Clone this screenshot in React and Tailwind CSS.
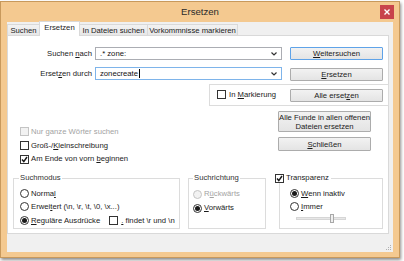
import React from "react";

const Check = ({ checked, disabled }) => (
  <span
    className={`flex h-[9px] w-[9px] shrink-0 items-center justify-center border ${
      disabled ? "border-[#c4c4c4] bg-[#f2f2f2]" : "border-[#333] bg-white"
    }`}
  >
    {checked && (
      <svg width="7" height="7" viewBox="0 0 7 7">
        <path d="M1 3.6 L2.8 5.6 L6 1" fill="none" stroke="#1a1a1a" strokeWidth="1.5" />
      </svg>
    )}
  </span>
);

const Radio = ({ checked, disabled }) => (
  <span
    className={`flex h-[9px] w-[9px] shrink-0 items-center justify-center rounded-full border ${
      disabled ? "border-[#c4c4c4] bg-[#f2f2f2]" : "border-[#333] bg-white"
    }`}
  >
    {checked && <span className="h-[5px] w-[5px] rounded-full bg-[#1a1a1a]" />}
  </span>
);

const Btn = ({ children, className = "" }) => (
  <div
    className={`flex w-[93px] shrink-0 items-center justify-center rounded-[1px] border bg-gradient-to-b from-[#f2f2f2] to-[#e4e4e4] text-center leading-[9px] text-[#1a1a1a] ${className}`}
  >
    {children}
  </div>
);

const Combo = ({ text, focused, caret }) => (
  <div
    className={`ml-[3px] flex h-[13px] w-[187px] items-center border bg-white pl-[4px] pr-[4px] ${
      focused ? "border-[#7eb4ea]" : "border-[#abadb3]"
    }`}
  >
    <span className="text-[#111]">{text}</span>
    {caret && <span className="ml-px h-[9px] w-px bg-black" />}
    <svg className="ml-auto" width="6" height="4" viewBox="0 0 6 4">
      <path d="M0.5 0.5 L3 3 L5.5 0.5" fill="none" stroke="#333" strokeWidth="1.2" />
    </svg>
  </div>
);

const K = ({ children }) => <span className="underline underline-offset-1">{children}</span>;

export default function App() {
  return (
    <div className="h-[261px] w-[404px] overflow-hidden bg-white font-['Liberation_Sans',Arial,sans-serif] text-[7.7px] text-[#1a1a1a]">
      <div className="mt-px flex h-[257px] w-[400px] flex-col border border-[#c8995c] bg-[#f4c990] px-[6px] shadow-[1px_2px_3px_rgba(0,0,0,0.45)]">
        {/* title bar */}
        <div className="relative flex h-[20px] shrink-0 items-center justify-center">
          <span className="text-[9.6px] text-[#2b2b2b]">Ersetzen</span>
          <div className="absolute right-[-1px] top-[3px] flex h-[14px] w-[14px] items-center justify-center bg-[#c8434b]">
            <svg width="6" height="6" viewBox="0 0 6 6">
              <path d="M0.5 0.5 L5.5 5.5 M5.5 0.5 L0.5 5.5" stroke="#fff" strokeWidth="1.4" />
            </svg>
          </div>
        </div>

        {/* client */}
        <div className="flex h-[230px] w-[386px] flex-col bg-[#f0f0f0]">
          {/* tabs */}
          <div className="flex h-[14px] items-end">
            <div className="flex h-[12px] w-[33px] items-center justify-center border border-b-0 border-[#d9d9d9] bg-gradient-to-b from-[#f2f2f2] to-[#e6e6e6]">
              Suchen
            </div>
            <div className="relative z-10 -ml-px flex h-[15px] w-[41px] items-center justify-center border border-b-0 border-[#d9d9d9] bg-white pb-[2px]">
              Ersetzen
            </div>
            <div className="-ml-px flex h-[12px] w-[69px] items-center justify-center border border-b-0 border-[#d9d9d9] bg-gradient-to-b from-[#f2f2f2] to-[#e6e6e6]">
              In Dateien suchen
            </div>
            <div className="-ml-px flex h-[12px] w-[91px] items-center justify-center border border-b-0 border-[#d9d9d9] bg-gradient-to-b from-[#f2f2f2] to-[#e6e6e6]">
              Vorkommnisse markieren
            </div>
          </div>

          {/* panel */}
          <div className="-mt-px h-[199px] w-[382px] border border-[#d9d9d9] bg-white">
            <div className="mt-[11px] flex items-center">
              <span className="w-[84px] text-right">
                Suchen <K>n</K>ach
              </span>
              <Combo text=".* zone:" />
              <Btn className="ml-[8px] h-[13px] border-[#5fa3e8]">
                <span>
                  <K>W</K>eitersuchen
                </span>
              </Btn>
            </div>
            <div className="mt-[6px] flex items-center">
              <span className="w-[84px] text-right">
                Erset<K>z</K>en durch
              </span>
              <Combo text="zonecreate" focused caret />
              <Btn className="ml-[8px] mt-[2px] h-[13px] border-[#acacac]">
                <span>
                  <K>E</K>rsetzen
                </span>
              </Btn>
            </div>
            <div className="ml-[201px] mt-[3px] flex h-[22px] w-[180px] items-center border border-[#dcdcdc]">
              <div className="flex w-[80px] items-center pl-[7px]">
                <Check />
                <span className="ml-[3px]">
                  In <K>M</K>arkierung
                </span>
              </div>
              <Btn className="h-[13px] border-[#acacac]">
                <span>
                  Alle erset<K>z</K>en
                </span>
              </Btn>
            </div>

            {/* middle */}
            <div className="flex h-[60px]">
              <div className="ml-[12px] mt-[19px] flex w-[258px] flex-col">
                <div className="flex h-[14px] items-center text-[#a3a3a3]">
                  <Check disabled />
                  <span className="ml-[2px]">Nur ganze Wörter suchen</span>
                </div>
                <div className="flex h-[14px] items-center">
                  <Check />
                  <span className="ml-[2px]">
                    Groß-/<K>K</K>leinschreibung
                  </span>
                </div>
                <div className="flex h-[14px] items-center">
                  <Check checked />
                  <span className="ml-[2px]">
                    Am Ende von vorn <K>b</K>eginnen
                  </span>
                </div>
              </div>
              <div className="mt-[5px] flex flex-col gap-[5px]">
                <Btn className="h-[21px] border-[#acacac]">
                  <span>
                    Alle Funde in allen offenen
                    <br />
                    Dateien ersetzen
                  </span>
                </Btn>
                <Btn className="h-[14px] border-[#acacac]">
                  <span>
                    <K>S</K>chließen
                  </span>
                </Btn>
              </div>
            </div>

            {/* groups */}
            <div className="ml-[5px] mt-[7px] flex items-start">
              <fieldset className="h-[56px] w-[167px] border border-[#dcdcdc] pl-[6px]">
                <legend className="ml-[-1px] px-px leading-[10px] text-[#333]">Suchmodus</legend>
                <div className="mt-[4px] flex h-[13px] items-center">
                  <Radio />
                  <span className="ml-[2px]">
                    Norma<K>l</K>
                  </span>
                </div>
                <div className="flex h-[13px] items-center">
                  <Radio />
                  <span className="ml-[2px]">
                    Erwei<K>t</K>ert (\n, \r, \t, \0, \x...)
                  </span>
                </div>
                <div className="mt-px flex h-[13px] items-center">
                  <Radio checked />
                  <span className="ml-[2px]">
                    <K>R</K>eguläre Ausdrücke
                  </span>
                  <span className="ml-[9px]">
                    <Check />
                  </span>
                  <span className="ml-[3px]">
                    <K>.</K> findet \r und \n
                  </span>
                </div>
              </fieldset>

              <fieldset className="ml-[8px] h-[56px] w-[78px] border border-[#dcdcdc] pl-[4px]">
                <legend className="ml-[0px] px-px leading-[10px] text-[#333]">Suchrichtung</legend>
                <div className="mt-[4px] flex h-[14px] items-center text-[#a3a3a3]">
                  <Radio disabled />
                  <span className="ml-[2px]">
                    R<K>ü</K>ckwärts
                  </span>
                </div>
                <div className="flex h-[14px] items-center">
                  <Radio checked />
                  <span className="ml-[2px]">
                    <K>V</K>orwärts
                  </span>
                </div>
              </fieldset>

              <fieldset className="ml-[13px] h-[56px] w-[104px] border border-[#dcdcdc] pl-[10px]">
                <legend className="ml-[-15px] flex items-center leading-[10px]">
                  <Check checked />
                  <span className="ml-[2px] bg-white pr-[2px]">Transparenz</span>
                </legend>
                <div className="mt-[4px] flex h-[13px] items-center">
                  <Radio checked />
                  <span className="ml-[2px]">
                    <K>W</K>enn inaktiv
                  </span>
                </div>
                <div className="flex h-[13px] items-center">
                  <Radio />
                  <span className="ml-[2px]">
                    <K>I</K>mmer
                  </span>
                </div>
                <div className="relative ml-[6px] mt-[4px] h-[3px] w-[50px] border border-[#d6d6d6] bg-[#e7e7e7]">
                  <div className="absolute left-[33px] top-[-4px] h-[9px] w-[4px] border border-[#a9a9a9] bg-[#efefef]" />
                </div>
              </fieldset>
            </div>
          </div>

          {/* bottom band with size grip */}
          <div className="flex flex-1 items-end justify-end pb-[1px] pr-[1px]">
            <svg width="6" height="6" viewBox="0 0 6 6">
              <rect x="4" y="0" width="1" height="1" fill="#b0b0b0" />
              <rect x="2" y="2" width="1" height="1" fill="#b0b0b0" />
              <rect x="4" y="2" width="1" height="1" fill="#b0b0b0" />
              <rect x="0" y="4" width="1" height="1" fill="#b0b0b0" />
              <rect x="2" y="4" width="1" height="1" fill="#b0b0b0" />
              <rect x="4" y="4" width="1" height="1" fill="#b0b0b0" />
            </svg>
          </div>
        </div>
      </div>
    </div>
  );
}
